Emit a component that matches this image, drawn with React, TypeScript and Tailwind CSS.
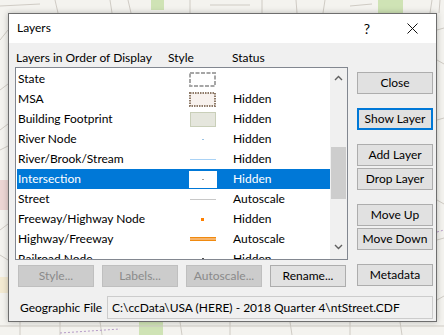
import React from "react";

const font = { fontFamily: 'Lato, "Noto Sans", sans-serif' };

type Row = { name: string; style: React.ReactNode; status: string };

function Chevron({ up }: { up?: boolean }) {
	return (
		<svg width="9" height="6" viewBox="0 0 9 6">
			<path
				d={up ? "M1 5 L4.5 1.5 L8 5" : "M1 1 L4.5 4.5 L8 1"}
				fill="none"
				stroke="#606060"
				strokeWidth="1.4"
			/>
		</svg>
	);
}

function BoxSwatch({ fill, stroke, dash }: { fill: string; stroke: string; dash: string }) {
	return (
		<svg width="27" height="15" viewBox="0 0 27 15">
			<rect x="1" y="1" width="25" height="13" fill={fill} stroke={stroke} strokeWidth="2" strokeDasharray={dash} />
		</svg>
	);
}

const rows: Row[] = [
	{
		name: "State",
		status: "",
		style: <BoxSwatch fill="#ffffff" stroke="#a6a6a6" dash="4 1.5" />,
	},
	{
		name: "MSA",
		status: "Hidden",
		style: <BoxSwatch fill="#f8f2ee" stroke="#8e7a68" dash="1.5 1" />,
	},
	{
		name: "Building Footprint",
		status: "Hidden",
		style: <div className="w-[26px] h-[15px] bg-[#e5e6dd] border border-[#c9cfb9]" />,
	},
	{
		name: "River Node",
		status: "Hidden",
		style: <div className="w-[2px] h-[1px] bg-[#9cc4e4]" />,
	},
	{
		name: "River/Brook/Stream",
		status: "Hidden",
		style: <div className="w-[26px] h-[1px] bg-[#a9d2f5]" />,
	},
	{
		name: "Intersection",
		status: "Hidden",
		style: (
			<div className="w-[28px] h-[17px] bg-white flex items-center justify-center">
				<div className="w-[2px] h-[1px] bg-[#a0a0a0]" />
			</div>
		),
	},
	{
		name: "Street",
		status: "Autoscale",
		style: <div className="w-[26px] h-[1px] bg-[#c8c8c8]" />,
	},
	{
		name: "Freeway/Highway Node",
		status: "Hidden",
		style: <div className="w-[3px] h-[3px] bg-[#ff8000]" />,
	},
	{
		name: "Highway/Freeway",
		status: "Autoscale",
		style: <div className="w-[26px] h-[4px] bg-[#f7b46a] border-y border-[#f08a10]" />,
	},
	{
		name: "Railroad Node",
		status: "Hidden",
		style: <div className="w-[2px] h-[2px] bg-[#505050]" />,
	},
];

function Btn({
	children,
	disabled,
	focused,
	className = "",
}: {
	children: React.ReactNode;
	disabled?: boolean;
	focused?: boolean;
	className?: string;
}) {
	const base = disabled
		? "bg-[#cccccc] border border-[#bfbfbf] text-[#8a8a8a]"
		: focused
			? "bg-[#e1e1e1] border-2 border-[#0078d7] text-black"
			: "bg-[#e1e1e1] border border-[#adadad] text-black";
	return (
		<div
			className={`w-[76px] h-[22px] flex items-center justify-center text-[12px] leading-none ${base} ${className}`}
		>
			{children}
		</div>
	);
}

function MapBackground() {
	return (
		<svg className="absolute inset-0" width="444" height="335" viewBox="0 0 444 335">
			<rect width="444" height="335" fill="#f4f3ef" />
			<rect x="151" y="0" width="13" height="10" fill="#cfe3b5" />
			<rect x="378" y="0" width="25" height="14" fill="#cfe3b5" />
			<rect x="139" y="322" width="24" height="13" fill="#cfe3b5" />
			<rect x="0" y="180" width="8" height="30" fill="#ecd6d4" />
			<rect x="0" y="277" width="8" height="16" fill="#f3ead2" />
			<g fill="none" stroke="#cfcbc4" strokeWidth="1">
				<path d="M0 6 L40 4 M55 0 L58 13 M110 0 L112 13 M128 0 L131 13 M190 0 L190 13 M210 5 L250 5 M262 0 L262 13 M296 0 L297 13 M325 0 L323 13 M350 6 L372 4" />
				<path d="M0 40 L8 30 M0 90 L8 84 M0 130 L8 124 M0 150 L8 146 M0 230 L8 224 M0 255 L8 260" />
				<path d="M437 30 L444 28 M437 60 L444 64 M437 120 L444 118 M437 200 L444 204 M437 240 L444 238 M437 300 L444 296" />
				<path d="M0 326 L444 326 M20 322 L20 335 M60 322 L60 335 M100 322 L102 335 M180 322 L182 335 M230 322 L230 335 M290 322 L292 335 M350 322 L350 335 M400 322 L402 335" />
				<path d="M432 0 L430 13 M440 0 L439 13" />
			</g>
			<path d="M60 333 L120 329" stroke="#b59ac8" strokeDasharray="2 2" fill="none" />
			<path d="M437 232 L444 230" stroke="#b59ac8" strokeDasharray="2 2" fill="none" />
		</svg>
	);
}

export default function App() {
	return (
		<div className="relative w-[444px] h-[335px] overflow-hidden" style={font}>
			<MapBackground />
			<div className="relative ml-[8px] pt-[13px]">
				<div className="w-[429px] h-[309px] border border-[#6e6e6e] bg-[#f0f0f0] flex flex-col shadow-[0_0_6px_rgba(0,0,0,0.25)]">
					{/* title bar */}
					<div className="h-[29px] bg-white flex items-center text-[12px] text-black shrink-0">
						<span className="ml-[8px] -mt-[1px]">Layers</span>
						<span className="ml-auto mr-[37px] text-[14px]">?</span>
						<svg className="mr-[18px]" width="11" height="11" viewBox="0 0 11 11">
							<path d="M0.5 0.5 L10.5 10.5 M10.5 0.5 L0.5 10.5" stroke="#111" strokeWidth="1" />
						</svg>
					</div>

					{/* body */}
					<div className="flex-1 pl-[6px] pr-[3px]">
						<div className="flex">
							{/* left column */}
							<div className="w-[333px] flex flex-col">
								<div className="h-[24px] relative text-[12px] text-black pt-[7px] leading-[16px]">
									<span className="absolute left-[1px]">Layers in Order of Display</span>
									<span className="absolute left-[153px]">Style</span>
									<span className="absolute left-[217px]">Status</span>
								</div>
								<div className="h-[193px] border border-[#828790] bg-white flex overflow-hidden">
									<div className="flex-1 pt-[1px] pl-[1px] overflow-hidden">
										{rows.map((r) => {
											const sel = r.name === "Intersection";
											return (
												<div
													key={r.name}
													className={`h-[20px] flex items-center text-[12px] leading-none ${
														sel ? "bg-[#0078d7] text-white" : "text-black"
													}`}
												>
													<span className="w-[155px] pl-[1px] whitespace-nowrap">{r.name}</span>
													<span className="w-[61px] flex items-center justify-center">{r.style}</span>
													<span>{r.status}</span>
												</div>
											);
										})}
									</div>
									{/* scrollbar */}
									<div className="w-[17px] bg-[#f0f0f0] flex flex-col items-center">
										<div className="h-[20px] flex items-center justify-center">
											<Chevron up />
										</div>
										<div className="w-[15px] h-[52px] bg-[#cdcdcd] mt-[59px]" />
										<div className="mt-auto h-[20px] flex items-center justify-center mb-[2px]">
											<Chevron />
										</div>
									</div>
								</div>
								<div className="flex gap-[8px] pl-[3px] mt-[5px]">
									<Btn disabled>Style...</Btn>
									<Btn disabled>Labels...</Btn>
									<Btn disabled>Autoscale...</Btn>
									<Btn>Rename...</Btn>
								</div>
							</div>

							{/* right column */}
							<div className="ml-[9px] flex flex-col pt-[29px]">
								<Btn>Close</Btn>
								<Btn focused className="mt-[14px]">
									Show Layer
								</Btn>
								<Btn className="mt-[14px]">Add Layer</Btn>
								<Btn className="mt-[2px]">Drop Layer</Btn>
								<Btn className="mt-[14px]">Move Up</Btn>
								<Btn className="mt-[2px]">Move Down</Btn>
								<Btn className="mt-[14px]">Metadata</Btn>
							</div>
						</div>

						{/* geographic file */}
						<div className="flex items-center mt-[9px]">
							<span className="pl-[5px] w-[92px] text-[12px] text-black whitespace-nowrap">Geographic File</span>
							<div className="w-[326px] h-[23px] border border-[#cccccc] bg-[#f0f0f0] flex items-center pl-[4px] text-[12px] text-black whitespace-nowrap overflow-hidden">
								C:\ccData\USA (HERE) - 2018 Quarter 4\ntStreet.CDF
							</div>
						</div>
					</div>
				</div>
			</div>
		</div>
	);
}
